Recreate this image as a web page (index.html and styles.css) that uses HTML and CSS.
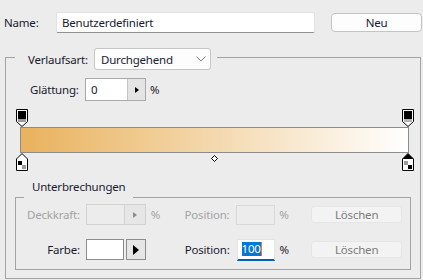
FILE: index.html
```html
<!DOCTYPE html>
<html lang="de">
<head>
  <meta charset="UTF-8">
  <title>Verlaufs-Editor</title>
  <link rel="stylesheet" href="styles.css">
</head>
<body>
  <div class="top">
    <span class="name-label">Name:</span>
    <div class="name-box">Benutzerdefiniert</div>
    <button class="btn neu">Neu</button>
  </div>

  <fieldset class="group outer">
    <legend class="type-legend">
      <span class="type-label">Verlaufsart:</span>
      <div class="select">
        <span>Durchgehend</span>
        <svg width="10" height="6" viewBox="0 0 10 6"><path d="M0.5 0.5L5 5L9.5 0.5" fill="none" stroke="#7a7a7a"/></svg>
      </div>
    </legend>

    <div class="smooth">
      <span class="smooth-label">Glättung:</span>
      <div class="spin">
        <span class="val">0</span>
        <span class="arrow"><svg width="4" height="6" viewBox="0 0 4 6"><path d="M0 0L4 3L0 6Z" fill="#000"/></svg></span>
      </div>
      <span class="unit">%</span>
    </div>

    <div class="editor">
      <div class="track">
        <!-- Deckkraft-Unterbrechungen -->
        <svg class="stop" style="left: 0%" width="12" height="18" viewBox="0 0 12 18">
          <path d="M0.5 0.5H11.5V12.5L6 17.5L0.5 12.5Z" fill="#fff" stroke="#000"/>
          <rect x="2" y="2" width="8" height="8" fill="#000"/>
          <rect x="2" y="10" width="8" height="3" fill="#9c9c9c"/>
        </svg>
        <svg class="stop" style="left: 100%" width="12" height="18" viewBox="0 0 12 18">
          <path d="M0.5 0.5H11.5V12.5L6 17.5L0.5 12.5Z" fill="#fff" stroke="#000"/>
          <rect x="2" y="2" width="8" height="8" fill="#000"/>
          <rect x="2" y="10" width="8" height="3" fill="#b4b4b4"/>
        </svg>
      </div>
      <div class="bar"></div>
      <div class="track">
        <!-- Farb-Unterbrechungen -->
        <svg class="stop" style="left: 0%" width="12" height="18" viewBox="0 0 12 18">
          <path d="M6 0.5L11.5 6V17.5H0.5V6Z" fill="#fff" stroke="#000"/>
          <rect x="2" y="8" width="4" height="4" fill="#000"/>
          <rect x="6" y="12" width="4" height="4" fill="#9c9c9c"/>
        </svg>
        <svg class="diamond" style="left: 50%" width="7" height="7" viewBox="0 0 7 7">
          <path d="M3.5 0.5L6.5 3.5L3.5 6.5L0.5 3.5Z" fill="#fff" stroke="#000"/>
        </svg>
        <svg class="stop" style="left: 100%" width="12" height="18" viewBox="0 0 12 18">
          <path d="M6 0.5L11.5 6V17.5H0.5V6Z" fill="#fff" stroke="#000"/>
          <path d="M6 0.5L11.5 6H0.5Z" fill="#000"/>
          <rect x="2" y="8" width="4" height="4" fill="#9c9c9c"/>
          <rect x="6" y="12" width="4" height="4" fill="#000"/>
        </svg>
      </div>
    </div>

    <fieldset class="group inner">
      <legend class="stops-legend">Unterbrechungen</legend>

      <div class="stop-row first disabled">
        <span class="row-label">Deckkraft:</span>
        <div class="spin small">
          <span class="val"></span>
          <span class="arrow"><svg width="4" height="6" viewBox="0 0 4 6"><path d="M0 0L4 3L0 6Z" fill="#8c8c8c"/></svg></span>
        </div>
        <span class="pct">%</span>
        <span class="pos-label">Position:</span>
        <div class="pos-input"></div>
        <span class="pct2">%</span>
        <button class="del">Löschen</button>
      </div>

      <div class="stop-row second">
        <span class="row-label">Farbe:</span>
        <div class="color-pick">
          <span class="swatch"></span>
          <span class="swatch-arrow"><svg width="6" height="10" viewBox="0 0 6 10"><path d="M0 0L6 5L0 10Z" fill="#000"/></svg></span>
        </div>
        <span class="pct"></span>
        <span class="pos-label">Position:</span>
        <div class="pos-input active"><span class="sel">100</span><span class="caret"></span></div>
        <span class="pct2">%</span>
        <button class="del">Löschen</button>
      </div>
    </fieldset>
  </fieldset>
</body>
</html>
```

FILE: styles.css
```css
body {
  margin: 0;
  padding: 12px 0 0 4px;
  background-color: #ececec;
  font-family: "Noto Sans", sans-serif;
  font-size: 11.5px;
  letter-spacing: -0.2px;
  color: #1a1a30;
}
button {
  font: inherit;
  letter-spacing: inherit;
  padding: 0;
  cursor: pointer;
}

/* Kopfzeile */
.top {
  display: flex;
  align-items: center;
  height: 21px;
}
.name-label {
  width: 52px;
}
.name-box {
  display: flex;
  align-items: center;
  width: 259px;
  height: 21px;
  box-sizing: border-box;
  padding-left: 5px;
  background-color: #fff;
  border: 1px solid #e2e2e2;
  border-bottom-color: #909090;
  border-radius: 2px;
}
.neu {
  margin-left: 16px;
  width: 91px;
  height: 19px;
  background-color: #fdfdfd;
  border: 1px solid #c4c4c4;
  border-radius: 4px;
  color: #1a1a30;
}

/* Gruppen */
.group {
  margin: 0;
  min-width: 0;
  border: 1px solid #a3a3a3;
}
.outer {
  margin: 11px 0 0 1px;
  width: 416px;
  box-sizing: border-box;
  padding: 0 9px 8px;
}
.type-legend {
  display: flex;
  align-items: center;
  padding: 4px 6px 0 13px;
}
.type-label {
  width: 66px;
}
.select {
  display: flex;
  align-items: center;
  justify-content: space-between;
  width: 117px;
  height: 22px;
  box-sizing: border-box;
  padding: 0 4px 0 6px;
  background-color: #fdfdfd;
  border: 1px solid #c6c6c6;
  border-radius: 3px;
}

/* Glättung */
.smooth {
  display: flex;
  align-items: center;
  margin-top: 8px;
  padding-left: 15px;
  height: 23px;
}
.smooth-label {
  width: 55px;
}
.spin {
  display: flex;
  width: 61px;
  height: 23px;
  box-sizing: border-box;
  background-color: #fff;
  border: 1px solid #a9a9a9;
}
.spin .val {
  flex: 1;
  display: flex;
  align-items: center;
  padding-left: 5px;
}
.spin .arrow {
  display: flex;
  align-items: center;
  justify-content: center;
  width: 17px;
  background-color: #e4e4e4;
  border-left: 1px solid #c4c4c4;
}
.unit {
  padding-left: 4px;
}

/* Verlaufsbalken */
.editor {
  margin: 8px 2px 0 5px;
}
.track {
  position: relative;
  height: 18px;
  margin: 0 2px 0 1px;
}
.stop {
  position: absolute;
  top: 0;
  margin-left: -5px;
}
.diamond {
  position: absolute;
  top: 2px;
  margin-left: -3px;
}
.bar {
  height: 26px;
  box-sizing: border-box;
  border: 1px solid #8c8c8c;
  background: linear-gradient(to right, #e9b25d, #ffffff);
}

/* Unterbrechungen */
.inner {
  margin-top: 8px;
  padding: 0 8px 9px;
}
.stops-legend {
  padding: 0 8px 20px;
  line-height: 16px;
}
.stop-row {
  display: flex;
  align-items: center;
  height: 21px;
}
.stop-row.first {
  margin-top: -11px;
}
.stop-row.second {
  margin-top: 14px;
}
.row-label {
  width: 62px;
  box-sizing: border-box;
  padding-right: 6px;
  text-align: right;
}
.disabled {
  color: #a3a3a3;
}
.spin.small {
  width: 60px;
  height: 21px;
  background-color: transparent;
  border-color: #d2d2d2;
}
.spin.small .arrow {
  width: 20px;
  background-color: #e6e6e6;
  border-left-color: #d2d2d2;
}
.pct {
  width: 39px;
  box-sizing: border-box;
  padding-left: 5px;
}
.pos-label {
  width: 52px;
}
.pos-input {
  display: flex;
  align-items: center;
  width: 39px;
  height: 20px;
  box-sizing: border-box;
  padding-left: 4px;
  border: 1px solid #d8d8d8;
}
.pos-input.active {
  height: 22px;
  background-color: #fff;
  border-color: #e4e4e4;
  border-bottom: 2px solid #005fb8;
}
.sel {
  background-color: #0078d7;
  color: #fff;
  line-height: 14px;
}
.caret {
  width: 1px;
  height: 14px;
  background-color: #f07a10;
}
.pct2 {
  width: 36px;
  box-sizing: border-box;
  padding-left: 4px;
  color: #1a1a30;
}
.disabled .pct2 {
  color: #a3a3a3;
}
.del {
  width: 91px;
  height: 17px;
  background-color: #f3f3f3;
  border: 1px solid #e6e6e6;
  border-radius: 3px;
  color: #7c7c7c;
  line-height: 15px;
}
.color-pick {
  display: flex;
  width: 60px;
  height: 21px;
}
.swatch {
  width: 38px;
  box-sizing: border-box;
  background-color: #fff;
  border: 1px solid #8c8c8c;
}
.swatch-arrow {
  display: flex;
  align-items: center;
  justify-content: center;
  margin-left: 2px;
  width: 20px;
  box-sizing: border-box;
  background-color: #e6e6e6;
  border: 1px solid #8c8c8c;
}
```
